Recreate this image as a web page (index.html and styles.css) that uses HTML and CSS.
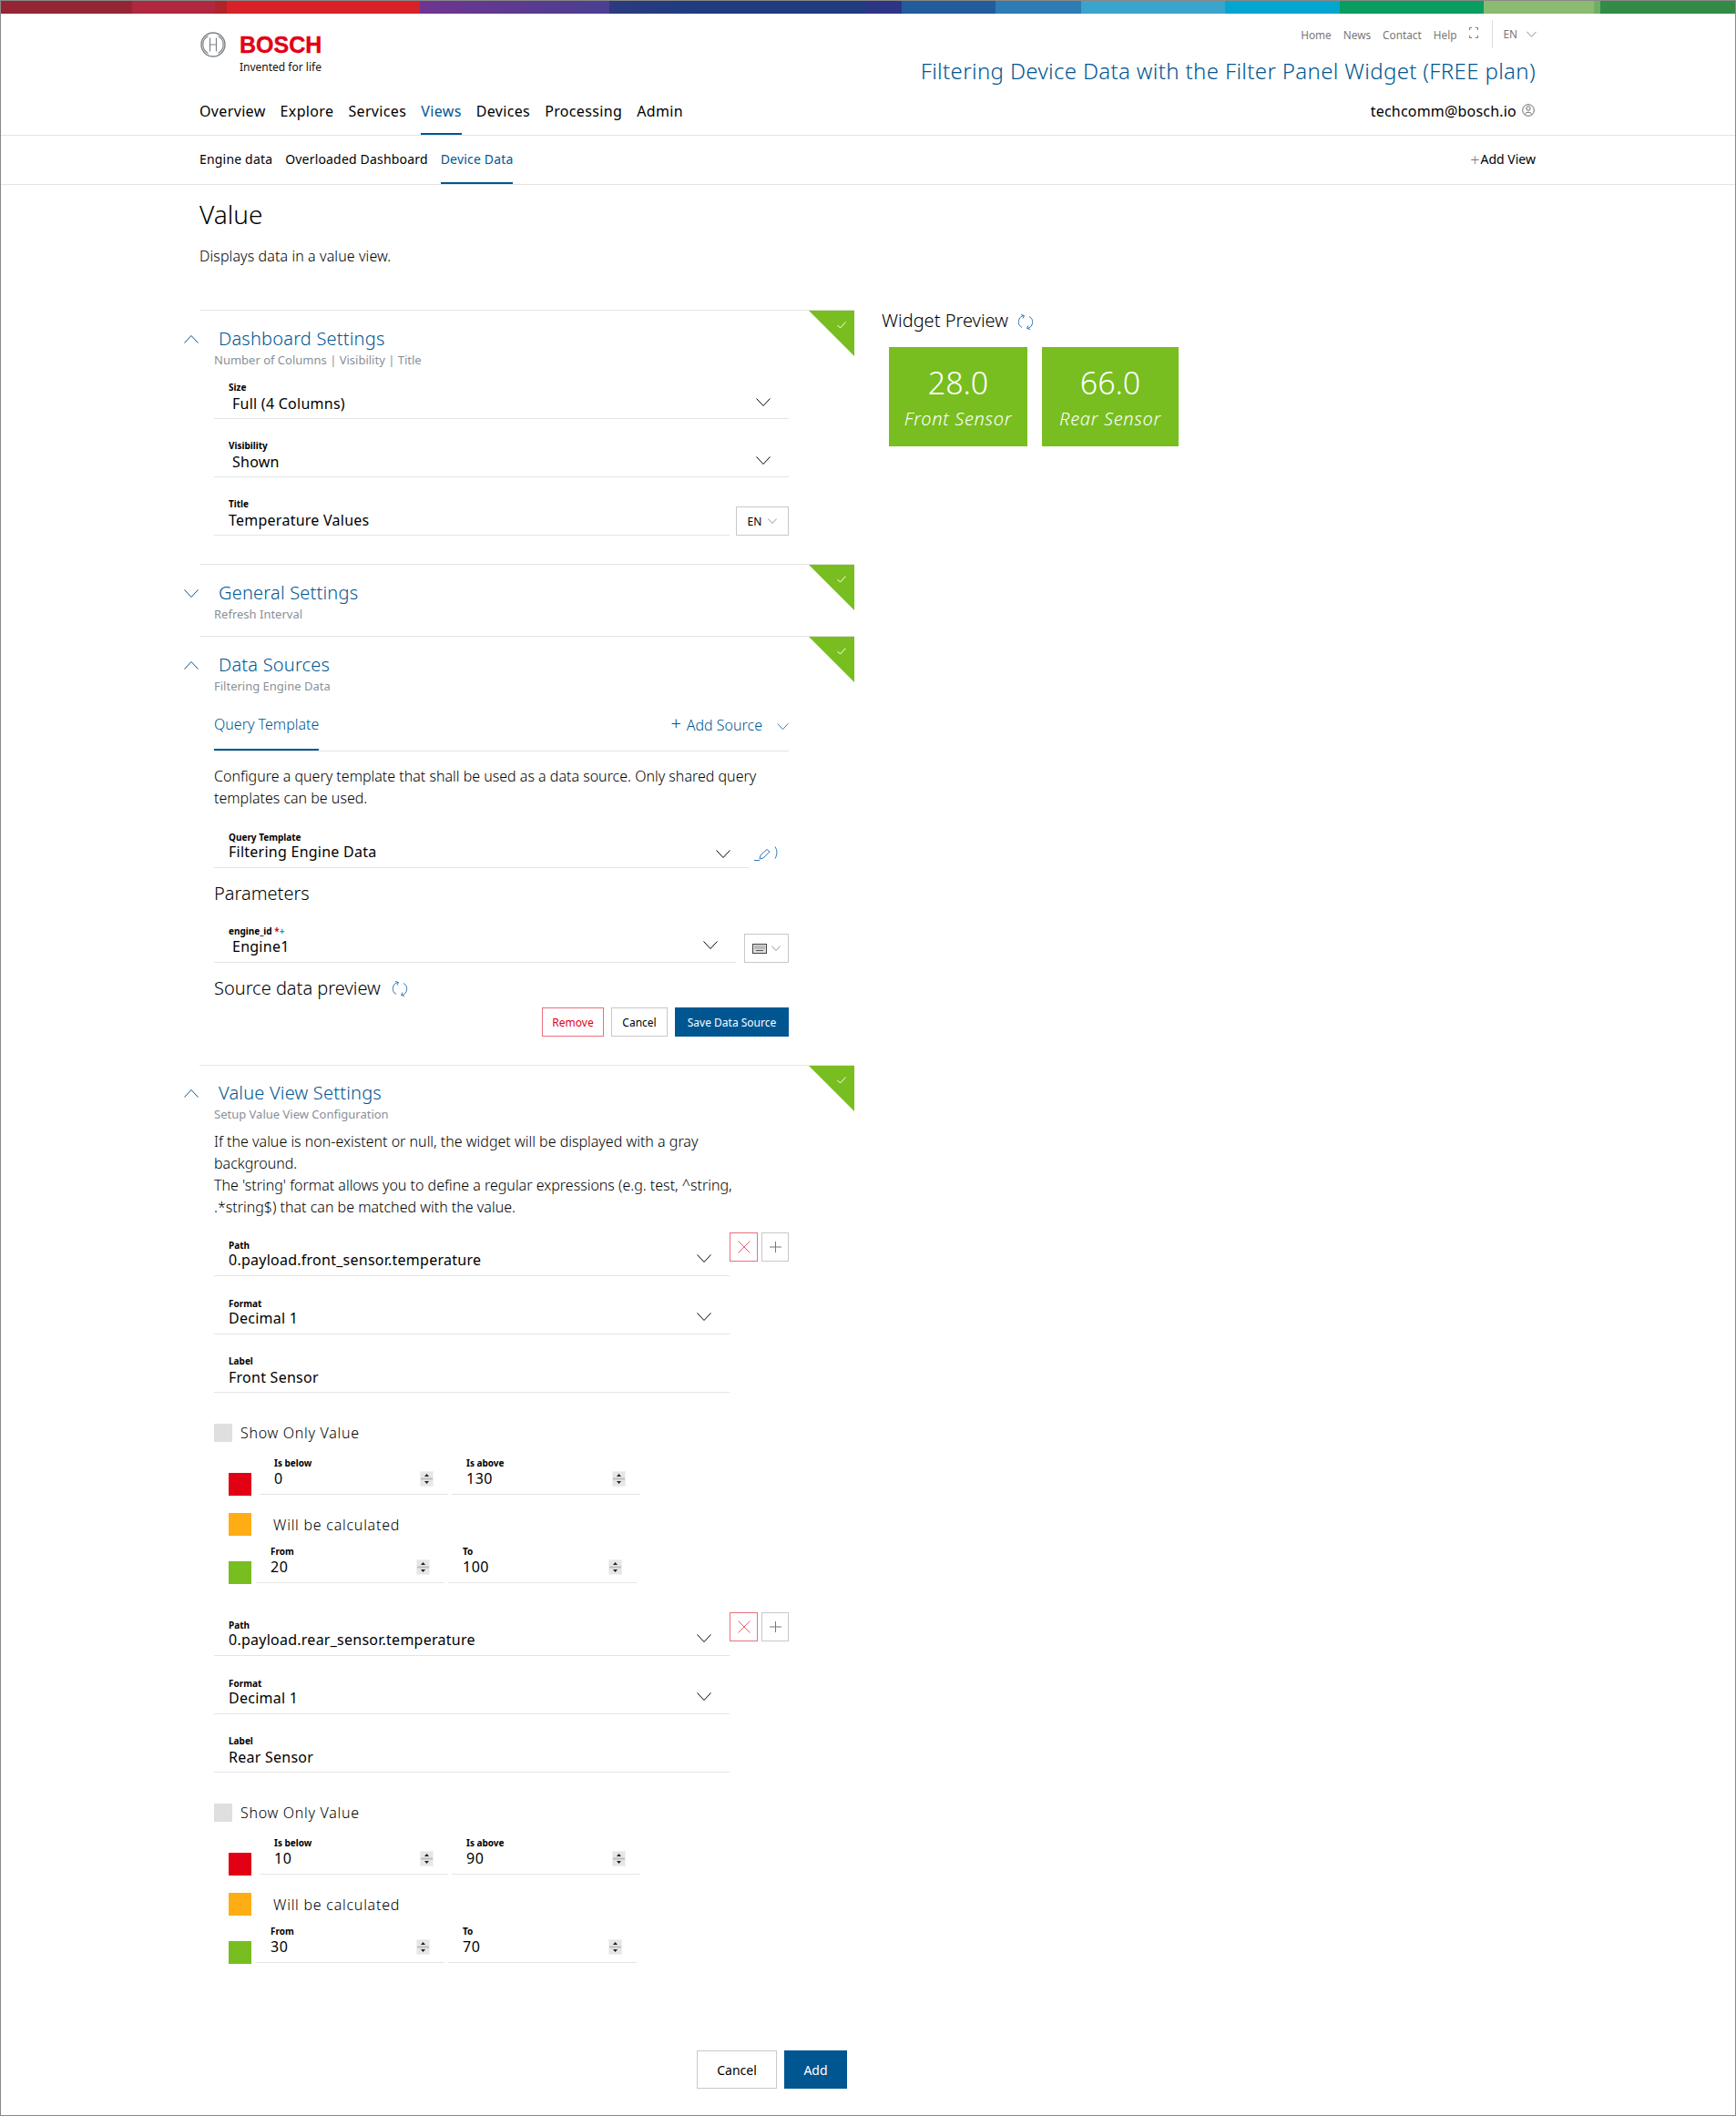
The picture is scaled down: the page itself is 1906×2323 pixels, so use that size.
FILE: index.html
```html
<!DOCTYPE html>
<html lang="en">
<head>
<meta charset="utf-8">
<title>Value</title>
<link rel="stylesheet" href="styles.css">
</head>
<body>
<svg class="defs" width="0" height="0">
  <symbol id="down" viewBox="0 0 16 9"><path d="M.5.5 8 8.500 15.500.5" fill="none" stroke="currentColor"/></symbol>
  <symbol id="up" viewBox="0 0 16 9"><path d="M.5 8.500 8 .5l7.500 8" fill="none" stroke="currentColor"/></symbol>
  <symbol id="refresh" viewBox="0 0 18 17"><path d="M7 1.500A7 7 0 0 0 5 14.500M11 15.500A7 7 0 0 0 13 2.500" fill="none" stroke="#2f79b8"/><path d="M4 .5 7.500 1.500 6 4.500M14 16.500 10.500 15.500 12 12.500" fill="none" stroke="#2f79b8"/></symbol>
  <symbol id="check" viewBox="0 0 10 8"><path d="M.5 4 3.500 7 9.500.5" fill="none" stroke="#fff"/></symbol>
  <symbol id="spin" viewBox="0 0 15 17"><rect width="15" height="17" fill="#f0f0f0"/><rect x="1" y="1" width="13" height="7" fill="#e6e6e6"/><rect x="1" y="9" width="13" height="7" fill="#e6e6e6"/><rect x="1" y="7.500" width="13" height="2" fill="#bdbdbd"/><path d="M7.500 3 10 6H5zM7.500 14 5 11h5z" fill="#222"/></symbol>
  <symbol id="x" viewBox="0 0 14 14"><path d="M.5.5l13 13M13.500.5l-13 13" stroke="#e8606c" fill="none"/></symbol>
  <symbol id="plus" viewBox="0 0 13 12"><path d="M6.500 0v12M0 6h13" stroke="#777" fill="none"/></symbol>
</svg>
<div class="page">
  <div class="rainbow"></div>
  <header class="header">
    <div class="wrap">
      <div class="brand-row">
        <div class="logo">
          <svg class="logo-mark" viewBox="0 0 28 28" width="28" height="28">
            <circle cx="14" cy="14" r="13" fill="none" stroke="#7d8389" stroke-width="1.400"/>
            <path d="M8.500 4.500a10.800 10.800 0 0 0 0 19M19.500 4.500a10.800 10.800 0 0 1 0 19M10.500 6.500v15M17.500 6.500v15M10.500 14h7" fill="none" stroke="#7d8389" stroke-width="1.200"/>
          </svg>
          <div class="logo-text">
            <div class="logo-name">BOSCH</div>
            <div class="logo-tag">Invented for life</div>
          </div>
        </div>
        <div class="brand-right">
          <div class="meta">
            <a>Home</a><a>News</a><a>Contact</a><a>Help</a>
            <svg class="fullscreen" viewBox="0 0 10 12" width="10" height="12"><path d="M.5 3V.5H3M7 .5h2.500V3M9.500 9v2.500H7M3 11.500H.5V9" fill="none" stroke="#777"/></svg>
            <div class="lang">EN<svg class="lang-ch" width="11" height="7"><use href="#down"/></svg></div>
          </div>
          <div class="app-title">Filtering Device Data with the Filter Panel Widget (FREE plan)</div>
        </div>
      </div>
      <div class="nav-row">
        <nav class="nav">
          <a>Overview</a><a>Explore</a><a>Services</a><a class="active">Views</a><a>Devices</a><a>Processing</a><a>Admin</a>
        </nav>
        <div class="user">techcomm@bosch.io
          <svg class="user-ic" viewBox="0 0 14 14" width="14" height="14"><circle cx="7" cy="7" r="6.300" fill="none" stroke="#444" stroke-width=".8"/><circle cx="7" cy="5" r="2.200" fill="none" stroke="#444" stroke-width=".8"/><path d="M3.500 11.500c.5-3 6.500-3 7 0" fill="none" stroke="#444" stroke-width=".8"/></svg>
        </div>
      </div>
    </div>
  </header>
  <div class="subbar">
    <div class="wrap subbar-in">
      <nav class="subnav"><a>Engine data</a><a>Overloaded Dashboard</a><a class="active">Device Data</a></nav>
      <div class="add-view"><span class="plus">+</span>Add View</div>
    </div>
  </div>
  <main class="wrap">
    <h1 class="page-title">Value</h1>
    <p class="page-desc">Displays data in a value view.</p>
    <div class="columns">
      <div class="form">

        <section class="sec">
          <div class="corner"></div><svg class="corner-check" width="10" height="8"><use href="#check"/></svg>
          <div class="sec-head"><svg class="sec-ch" width="16" height="9"><use href="#up"/></svg><h2>Dashboard Settings</h2></div>
          <div class="sec-sub">Number of Columns | Visibility | Title</div>
          <div class="body-first">
            <div class="field">
              <label>Size</label>
              <div class="val sel"><span class="in4">Full (4 Columns)</span><svg class="ch" width="16" height="9"><use href="#down"/></svg></div>
            </div>
            <div class="field gap23">
              <label>Visibility</label>
              <div class="val sel"><span class="in4">Shown</span><svg class="ch" width="16" height="9"><use href="#down"/></svg></div>
            </div>
            <div class="with-box gap23">
              <div class="field grow">
                <label>Title</label>
                <div class="val">Temperature Values</div>
              </div>
              <div class="box lang-box">EN<svg class="lang-ch" width="10" height="6"><use href="#down"/></svg></div>
            </div>
          </div>
        </section>

        <section class="sec short">
          <div class="corner"></div><svg class="corner-check" width="10" height="8"><use href="#check"/></svg>
          <div class="sec-head"><svg class="sec-ch" width="16" height="9"><use href="#down"/></svg><h2>General Settings</h2></div>
          <div class="sec-sub">Refresh Interval</div>
        </section>

        <section class="sec">
          <div class="corner"></div><svg class="corner-check" width="10" height="8"><use href="#check"/></svg>
          <div class="sec-head"><svg class="sec-ch" width="16" height="9"><use href="#up"/></svg><h2>Data Sources</h2></div>
          <div class="sec-sub">Filtering Engine Data</div>
          <div class="tabs">
            <div class="tab">Query Template</div>
            <div class="tab-add"><span class="tab-plus">+</span>Add Source<svg class="tab-ch" width="13" height="7"><use href="#down"/></svg></div>
          </div>
          <p class="para first">Configure a query template that shall be used as a data source. Only shared query templates can be used.</p>
          <div class="query-row">
            <div class="field up grow">
              <label>Query Template</label>
              <div class="val sel"><span>Filtering Engine Data</span><svg class="ch low" width="16" height="9"><use href="#down"/></svg></div>
            </div>
            <svg class="pencil" viewBox="0 0 27 16" width="27" height="16"><path d="M0 15.500h6M6 14l1-4 7-6.500 3 2.500-7 7z" fill="none" stroke="#2f79b8"/><path d="M23 .5c2.500 4 2.500 9 0 13" fill="none" stroke="#2f79b8"/></svg>
          </div>
          <h3 class="sub-h params">Parameters</h3>
          <div class="with-box params-field">
            <div class="field grow param">
              <label>engine_id <span class="req">*</span><span class="opt">+</span></label>
              <div class="val sel"><span class="in4">Engine1</span><svg class="ch" width="16" height="9"><use href="#down"/></svg></div>
            </div>
            <div class="box kb-box">
              <svg viewBox="0 0 16 11" width="16" height="11"><rect x=".5" y=".5" width="15" height="10" fill="#ddd" stroke="#444"/><path d="M2.500 3h11M2.500 5h11" stroke="#555" stroke-dasharray="1 1"/><path d="M4 7.500h8" stroke="#555"/></svg>
              <svg class="lang-ch" width="10" height="6"><use href="#down"/></svg>
            </div>
          </div>
          <div class="preview-h"><h3 class="sub-h">Source data preview</h3><svg class="refresh" width="18" height="17"><use href="#refresh"/></svg></div>
          <div class="btns">
            <button class="btn danger">Remove</button>
            <button class="btn">Cancel</button>
            <button class="btn primary">Save Data Source</button>
          </div>
        </section>

        <section class="sec value-sec">
          <div class="corner"></div><svg class="corner-check" width="10" height="8"><use href="#check"/></svg>
          <div class="sec-head"><svg class="sec-ch" width="16" height="9"><use href="#up"/></svg><h2>Value View Settings</h2></div>
          <div class="sec-sub">Setup Value View Configuration</div>
          <p class="para info">If the value is non-existent or null, the widget will be displayed with a gray background.<br>The 'string' format allows you to define a regular expressions (e.g. test, ^string, .*string$) that can be matched with the value.</p>

          <div class="group">
            <div class="path-row">
              <div class="field up path">
                <label>Path</label>
                <div class="val sel"><span>0.payload.front_sensor.temperature</span><svg class="ch" width="16" height="9"><use href="#down"/></svg></div>
              </div>
              <div class="acts">
                <div class="box act del"><svg width="14" height="14"><use href="#x"/></svg></div>
                <div class="box act"><svg width="13" height="12"><use href="#plus"/></svg></div>
              </div>
            </div>
            <div class="field up path gap24">
              <label>Format</label>
              <div class="val sel"><span>Decimal 1</span><svg class="ch" width="16" height="9"><use href="#down"/></svg></div>
            </div>
            <div class="field path gap23">
              <label>Label</label>
              <div class="val">Front Sensor</div>
            </div>
            <div class="only"><span class="chk"></span>Show Only Value</div>
            <div class="range first-range">
              <span class="sw red"></span>
              <div class="field num"><label>Is below</label><div class="val sel"><span>0</span><svg class="spin" width="15" height="17"><use href="#spin"/></svg></div></div>
              <div class="field num"><label>Is above</label><div class="val sel"><span>130</span><svg class="spin" width="15" height="17"><use href="#spin"/></svg></div></div>
            </div>
            <div class="calc"><span class="sw orange"></span>Will be calculated</div>
            <div class="range tight">
              <span class="sw green"></span>
              <div class="field num"><label>From</label><div class="val sel"><span>20</span><svg class="spin" width="15" height="17"><use href="#spin"/></svg></div></div>
              <div class="field num"><label>To</label><div class="val sel"><span>100</span><svg class="spin" width="15" height="17"><use href="#spin"/></svg></div></div>
            </div>
          </div>

          <div class="group next">
            <div class="path-row">
              <div class="field up path">
                <label>Path</label>
                <div class="val sel"><span>0.payload.rear_sensor.temperature</span><svg class="ch" width="16" height="9"><use href="#down"/></svg></div>
              </div>
              <div class="acts">
                <div class="box act del"><svg width="14" height="14"><use href="#x"/></svg></div>
                <div class="box act"><svg width="13" height="12"><use href="#plus"/></svg></div>
              </div>
            </div>
            <div class="field up path gap24">
              <label>Format</label>
              <div class="val sel"><span>Decimal 1</span><svg class="ch" width="16" height="9"><use href="#down"/></svg></div>
            </div>
            <div class="field path gap23">
              <label>Label</label>
              <div class="val">Rear Sensor</div>
            </div>
            <div class="only"><span class="chk"></span>Show Only Value</div>
            <div class="range first-range">
              <span class="sw red"></span>
              <div class="field num"><label>Is below</label><div class="val sel"><span>10</span><svg class="spin" width="15" height="17"><use href="#spin"/></svg></div></div>
              <div class="field num"><label>Is above</label><div class="val sel"><span>90</span><svg class="spin" width="15" height="17"><use href="#spin"/></svg></div></div>
            </div>
            <div class="calc"><span class="sw orange"></span>Will be calculated</div>
            <div class="range tight">
              <span class="sw green"></span>
              <div class="field num"><label>From</label><div class="val sel"><span>30</span><svg class="spin" width="15" height="17"><use href="#spin"/></svg></div></div>
              <div class="field num"><label>To</label><div class="val sel"><span>70</span><svg class="spin" width="15" height="17"><use href="#spin"/></svg></div></div>
            </div>
          </div>
        </section>
      </div>

      <aside class="preview">
        <div class="preview-title">Widget Preview<svg class="refresh" width="18" height="17"><use href="#refresh"/></svg></div>
        <div class="tiles">
          <div class="tile"><div class="tile-v">28.0</div><div class="tile-l">Front Sensor</div></div>
          <div class="tile t2"><div class="tile-v">66.0</div><div class="tile-l">Rear Sensor</div></div>
        </div>
      </aside>
    </div>
    <div class="footer">
      <button class="btn big cancel">Cancel</button>
      <button class="btn big primary add">Add</button>
    </div>
  </main>
</div>
</body>
</html>
```
FILE: styles.css
```css
* { box-sizing: border-box; }
html, body { margin: 0; padding: 0; }
body { font-family: "Noto Sans", "Liberation Sans", sans-serif; color: #000; background: #fff; font-size: 14px; }
.defs { position: absolute; }
.page { border: 1px solid #888; height: 2323px; overflow: hidden; }
.rainbow {
  height: 14px;
  background: linear-gradient(90deg,
    #952532 0, #952532 144px, #b0283d 144px, #b0283d 235px, #b0242a 235px, #b0242a 248px,
    #d92127 248px, #d92127 460px, #6f3590 460px, #4a3f91 668px, #2c3a7f 668px, #203c80 760px,
    #203c80 950px, #2d3585 950px, #2d3585 989px, #235c9c 989px, #235c9c 1092px, #2e7cb4 1092px, #2e7cb4 1186px,
    #3ba4cc 1186px, #3ba4cc 1344px, #04a6cf 1344px, #04a6cf 1470px, #0a9d60 1470px, #0a9d60 1628px,
    #8bbb70 1628px, #8bbb70 1749px, #6fae66 1749px, #6fae66 1756px, #328b47 1756px, #328b47 100%);
}
.wrap { margin-left: 218px; width: 1467px; }
.header { height: 134px; border-bottom: 1px solid #e4e4e4; }
.brand-row { display: flex; justify-content: space-between; height: 89px; }
.logo { display: flex; padding-top: 19px; }
.logo-mark { display: block; margin: 1px 15px 0 1px; }
.logo-name { font-family: "Liberation Sans", sans-serif; font-weight: 700; font-size: 25px; line-height: 26px; color: #e20015; margin-top: 2px; -webkit-text-stroke: .4px #e20015; }
.logo-tag { font-size: 12px; line-height: 16px; margin-top: 4px; color: #111; }
.brand-right { display: flex; flex-direction: column; align-items: flex-end; padding-top: 7px; }
.meta { display: flex; align-items: center; height: 31px; font-size: 11.800px; color: #777; }
.meta a { margin-right: 13px; }
.fullscreen { margin: -4px 15px 0 1px; }
.lang { border-left: 1px solid #ddd; height: 31px; line-height: 31px; padding-left: 11px; display: flex; align-items: center; margin-right: -1px; }
.lang-ch { margin-left: 10px; color: #555; }
.app-title { font-size: 24px; font-weight: 300; line-height: 32px; margin-top: 9px; color: #005691; white-space: nowrap; letter-spacing: .35px; }
.nav-row { display: flex; justify-content: space-between; height: 44px; }
.nav { display: flex; gap: 16px; }
.nav a { display: block; font-size: 16px; line-height: 24px; padding-top: 6px; border-bottom: 2px solid transparent; letter-spacing: .35px; }
.nav a.active, .subnav a.active { color: #005691; border-bottom-color: #005691; }
.user { display: flex; align-items: flex-start; font-size: 16px; line-height: 24px; padding-top: 6px; gap: 6px; white-space: nowrap; letter-spacing: .2px; }
.user-ic { margin-top: 4px; margin-right: 1px; }
.subbar { height: 54px; border-bottom: 1px solid #e4e4e4; }
.subbar-in { display: flex; justify-content: space-between; height: 53px; }
.subnav { display: flex; gap: 14px; }
.subnav a { display: block; font-size: 14px; line-height: 20px; padding-top: 16px; border-bottom: 2px solid transparent; height: 53px; letter-spacing: .18px; }
.add-view { font-size: 14px; line-height: 20px; display: flex; align-items: center; height: 52px; }
.plus { color: #777; font-weight: 300; font-size: 18px; line-height: 20px; margin-right: 1px; }
.page-title { font-size: 28px; font-weight: 300; line-height: 36px; margin: 14px 0 0; }
.page-desc { font-size: 16px; font-weight: 300; line-height: 20px; margin: 18px 0 0; letter-spacing: .1px; }
.columns { display: flex; margin-top: 49px; }
.form { width: 719px; flex: none; }
.sec { position: relative; border-top: 1px solid #e4e4e4; padding: 19px 72px 31px 16px; }
.sec.short { padding-bottom: 15px; }
.value-sec { padding-top: 18px; padding-bottom: 0; }
.corner { position: absolute; top: 0; right: 0; width: 50px; height: 50px; background: #78be20; clip-path: polygon(0 0, 100% 0, 100% 100%); }
.corner-check { position: absolute; top: 12px; right: 9px; }
.sec-head { display: flex; align-items: center; margin-left: -33px; color: #005691; }
.sec-ch { flex: none; margin-right: 22px; }
.sec-head h2 { font-size: 20px; font-weight: 300; line-height: 24px; margin: 0; letter-spacing: .2px; }
.sec-sub { font-size: 13px; line-height: 18px; color: #8a9097; margin-top: 2px; }
.body-first { margin-top: 15px; }
.field { height: 41px; border-bottom: 1px solid #e4e4e4; }
.field.up { height: 40px; }
.field label { display: block; font-size: 10px; font-weight: 700; line-height: 12px; padding-left: 16px; white-space: nowrap; }
.val { font-size: 16px; line-height: 20px; padding-left: 16px; margin-top: 2px; letter-spacing: .25px; }
.up .val { margin-top: 0; }
.num .val { margin-top: 1px; }
.param .val { margin-top: 1px; }
.sel { display: flex; justify-content: space-between; padding-right: 20px; }
.in4 { padding-left: 4px; }
.ch { margin-top: 4px; flex: none; }
.ch.low { margin-top: 8px; }
.gap23 { margin-top: 23px; }
.gap24 { margin-top: 24px; }
.grow { flex: 1; min-width: 0; }
.with-box { display: flex; align-items: flex-end; }
.box { border: 1px solid #c8c8c8; display: flex; align-items: center; justify-content: center; flex: none; }
.lang-box { width: 58px; height: 32px; margin-left: 7px; font-size: 12px; }
.kb-box { width: 49px; height: 32px; margin-left: 9px; }
.kb-box .lang-ch { margin-left: 5px; }
.lang-box .lang-ch { margin-left: 7px; }
.tabs { display: flex; justify-content: space-between; margin-top: 19px; height: 44px; border-bottom: 1px solid #e4e4e4; }
.tab { color: #005691; font-size: 16px; font-weight: 300; line-height: 28px; height: 43px; border-bottom: 2px solid #005691; }
.tab-add { color: #005691; font-size: 16px; font-weight: 300; line-height: 28px; display: flex; align-items: flex-start; padding-top: 1px; }
.tab-plus { font-size: 20px; font-weight: 300; margin-right: 6px; margin-top: -2px; }
.tab-ch { margin: 12px 0 0 16px; }
.para { font-size: 16px; font-weight: 300; line-height: 24px; margin: 0; }
.para.first { margin-top: 15px; }
.para.info { margin-top: 9px; width: 590px; }
.query-row { display: flex; margin-top: 25px; }
.pencil { margin: 16px 11px 0 6px; flex: none; }
.sub-h { font-size: 20px; font-weight: 300; line-height: 28px; margin: 0; }
.params { margin-top: 14px; }
.params-field { margin-top: 21px; }
.preview-h { display: flex; align-items: center; margin-top: 14px; }
.refresh { margin-left: 12px; flex: none; }
.btns { display: flex; justify-content: flex-end; gap: 8px; margin-top: 7px; }
.btn { font-family: inherit; font-size: 12px; height: 32px; background: #fff; border: 1px solid #c8c8c8; color: #000; padding: 0; width: 62px; }
.btn.danger { width: 68px; color: #e20015; border-color: #e8707c; }
.btn.primary { width: 125px; background: #005691; border-color: #005691; color: #fff; }
.group { width: 631px; margin-top: 24px; }
.group.next { margin-top: 39px; }
.path-row { display: flex; }
.path { width: 566px; flex: none; }
.acts { display: flex; gap: 4px; margin-top: -8px; align-self: flex-start; }
.act { width: 30px; height: 32px; }
.del { width: 31px; border-color: #e8707c; }
.only { display: flex; align-items: center; font-size: 16px; font-weight: 300; height: 20px; margin-top: 34px; letter-spacing: .7px; }
.chk { width: 20px; height: 20px; background: #dfdfdf; margin-right: 9px; }
.range { display: flex; padding-left: 16px; }
.first-range { margin-top: 17px; }
.first-range .sw { margin-right: 9px; }
.tight { margin-top: 11px; }
.tight .sw { margin-right: 5px; }
.sw { display: block; width: 25px; height: 25px; margin-top: 17px; flex: none; }
.red { background: #e20015; }
.orange { background: #ffad14; margin-top: 0; margin-right: 24px; }
.green { background: #78be20; }
.num { width: 207px; margin-right: 4px; padding-right: 16px; }
.num .val { padding-right: 0; letter-spacing: .5px; }
.spin { display: block; margin-top: 2px; flex: none; }
.calc { display: flex; align-items: center; font-size: 16px; font-weight: 300; margin: 19px 0 0 16px; height: 25px; letter-spacing: .75px; }
.preview { margin-left: 30px; }
.preview-title { display: flex; align-items: center; font-size: 20px; font-weight: 300; line-height: 24px; }
.preview-title .refresh { margin-left: 10px; margin-top: 3px; }
.tiles { display: flex; gap: 16px; margin: 17px 0 0 8px; }
.tile { width: 152px; height: 109px; background: #78be20; color: #fff; text-align: center; }
.t2 { width: 150px; }
.tile-v { font-size: 34px; font-weight: 300; line-height: 40px; margin-top: 19px; }
.tile-l { font-size: 20px; font-style: italic; font-weight: 300; line-height: 26px; margin-top: 7px; letter-spacing: .7px; }
.req { color: #e20015; }
.opt { color: #00a8b0; }
.footer { display: flex; gap: 8px; margin-left: 546px; margin-top: 95px; }
.btn.big { height: 42px; font-size: 14px; }
.btn.cancel { width: 88px; }
.btn.add { width: 69px; }
```
